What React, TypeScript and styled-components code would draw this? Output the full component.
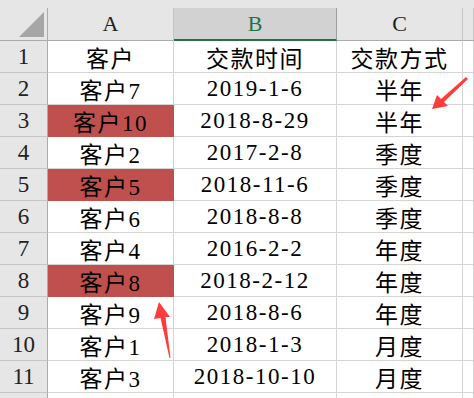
import styled, { createGlobalStyle } from 'styled-components';

const GlobalStyle = createGlobalStyle`
    html, body {
        margin: 0;
        padding: 0;
        background: #ffffff;
    }
    body {
        font-family: "Liberation Serif", "Noto Sans CJK SC", serif;
    }
`;

const Page = styled.div`
    position: relative;
    width: 474px;
    height: 398px;
    overflow: hidden;
    background: #ffffff;
`;

const TopStrip = styled.div`
    height: 8px;
    background: #e6e6e6;
`;

const Sheet = styled.div`
    display: grid;
    grid-template-columns: 48px 126px 163px 126px 1fr;
    grid-template-rows: 33px repeat(12, 32px);
`;

const Corner = styled.div`
    position: relative;
    background: #e6e6e6;
    border-right: 1px solid #ababab;
    border-bottom: 1px solid #ababab;
`;

const CornerMark = styled.div`
    position: absolute;
    left: 19px;
    top: 4px;
    width: 0;
    height: 0;
    border-left: 25px solid transparent;
    border-bottom: 25px solid #a6a6a6;
`;

const ColHead = styled.div<{ $active?: boolean }>`
    display: flex;
    align-items: center;
    justify-content: center;
    box-sizing: border-box;
    background: ${(p) => (p.$active ? '#d2d2d2' : '#e6e6e6')};
    color: ${(p) => (p.$active ? '#217346' : '#222')};
    border-right: 1px solid ${(p) => (p.$active ? '#9f9f9f' : '#c6c6c6')};
    border-bottom: ${(p) => (p.$active ? '2px solid #217346' : '1px solid #ababab')};
    padding-top: ${(p) => (p.$active ? '1px' : '0')};
    font-size: 22px;
`;

const RowHead = styled.div`
    display: flex;
    align-items: center;
    justify-content: center;
    background: #e6e6e6;
    color: #222;
    border-right: 1px solid #ababab;
    border-bottom: 1px solid #c6c6c6;
    font-size: 23px;
`;

const Cell = styled.div<{ $fill?: boolean }>`
    display: flex;
    align-items: center;
    justify-content: center;
    white-space: nowrap;
    background: ${(p) => (p.$fill ? '#c0504d' : '#ffffff')};
    color: #000;
    border-right: 1px solid ${(p) => (p.$fill ? '#c0504d' : '#d4d4d4')};
    border-bottom: 1px solid ${(p) => (p.$fill ? '#c0504d' : '#d4d4d4')};
    font-size: 23px;
    letter-spacing: 1.5px;
`;

const Overlay = styled.svg`
    position: absolute;
    left: 0;
    top: 0;
    pointer-events: none;
`;

const rows: [string, string, string, boolean][] = [
    ['客户', '交款时间', '交款方式', false],
    ['客户7', '2019-1-6', '半年', false],
    ['客户10', '2018-8-29', '半年', true],
    ['客户2', '2017-2-8', '季度', false],
    ['客户5', '2018-11-6', '季度', true],
    ['客户6', '2018-8-8', '季度', false],
    ['客户4', '2016-2-2', '年度', false],
    ['客户8', '2018-2-12', '年度', true],
    ['客户9', '2018-8-6', '年度', false],
    ['客户1', '2018-1-3', '月度', false],
    ['客户3', '2018-10-10', '月度', false],
];

export default function App() {
    return (
        <Page>
            <GlobalStyle />
            <TopStrip />
            <Sheet>
                <Corner>
                    <CornerMark />
                </Corner>
                <ColHead>A</ColHead>
                <ColHead $active>B</ColHead>
                <ColHead>C</ColHead>
                <ColHead />
                {rows.map(([name, date, mode, fill], i) => (
                    <>
                        <RowHead key={`h${i}`}>{i + 1}</RowHead>
                        <Cell key={`a${i}`} $fill={fill}>
                            {name}
                        </Cell>
                        <Cell key={`b${i}`}>{date}</Cell>
                        <Cell key={`c${i}`}>{mode}</Cell>
                        <Cell key={`d${i}`} />
                    </>
                ))}
                <RowHead />
                <Cell />
                <Cell />
                <Cell />
                <Cell />
            </Sheet>
            <Overlay width="474" height="398" viewBox="0 0 474 398">
                <polygon
                    points="432,109 437,95 441,99 466,77 468,79 444,102 448,106"
                    fill="#ff3b3b"
                />
                <polygon
                    points="159,302 154,319 160.5,318 169.5,358 170.5,358 165.5,317 170,317"
                    fill="#ff3b3b"
                />
            </Overlay>
        </Page>
    );
}
